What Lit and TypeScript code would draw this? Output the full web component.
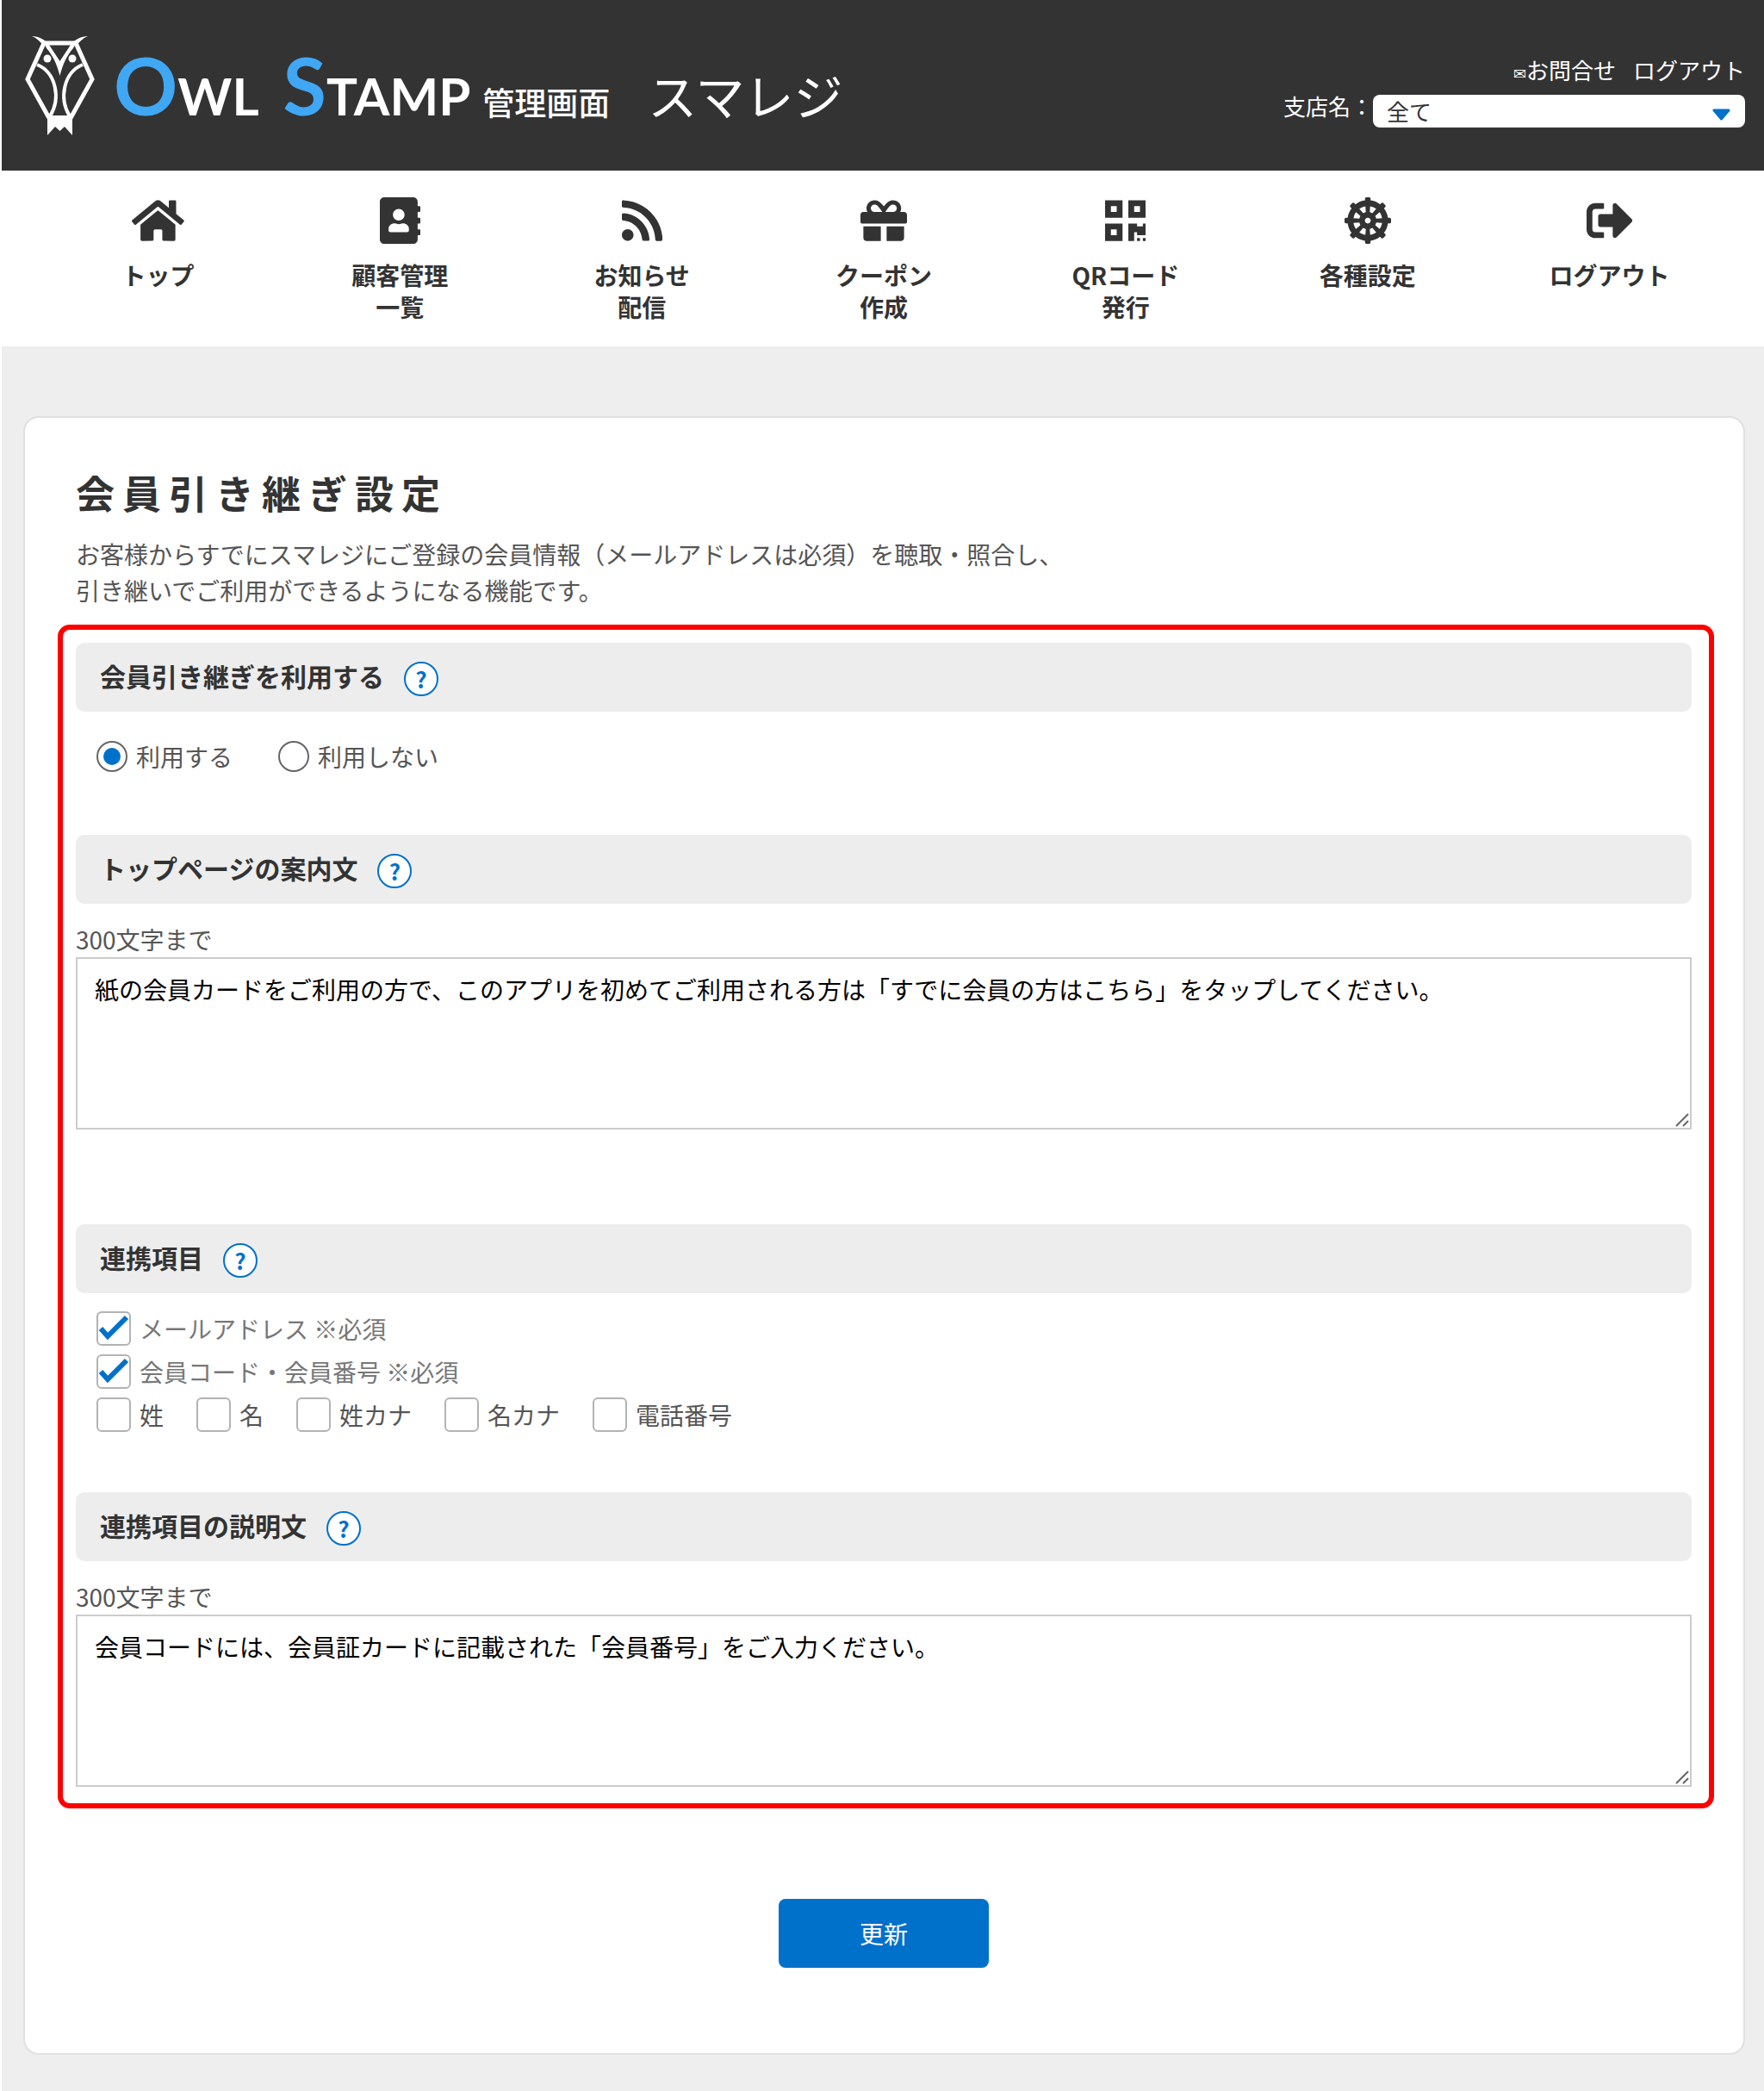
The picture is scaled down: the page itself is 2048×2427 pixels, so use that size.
import { LitElement, html, css, svg } from "lit";
import { customElement, property } from "lit/decorators.js";

interface NavItem {
  lines: string[];
  width: number;
  path: string;
}

const NAV: NavItem[] = [
  {
    lines: ["トップ"],
    width: 576,
    path: "M280.37 148.26L96 300.11V464a16 16 0 0 0 16 16l112.06-.29a16 16 0 0 0 15.92-16V368a16 16 0 0 1 16-16h64a16 16 0 0 1 16 16v95.64a16 16 0 0 0 16 16.05L464 480a16 16 0 0 0 16-16V300L295.67 148.26a12.19 12.19 0 0 0-15.3 0zM571.6 251.47L488 182.56V44.05a12 12 0 0 0-12-12h-56a12 12 0 0 0-12 12v72.61L318.47 43a48 48 0 0 0-61 0L4.34 251.47a12 12 0 0 0-1.6 16.9l25.5 31A12 12 0 0 0 45.15 301l235.22-193.74a12.19 12.19 0 0 1 15.3 0L530.9 301a12 12 0 0 0 16.9-1.6l25.5-31a12 12 0 0 0-1.7-16.93z",
  },
  {
    lines: ["顧客管理", "一覧"],
    width: 448,
    path: "M436 160c6.6 0 12-5.4 12-12v-40c0-6.6-5.4-12-12-12h-20V48c0-26.5-21.5-48-48-48H48C21.5 0 0 21.5 0 48v416c0 26.5 21.5 48 48 48h320c26.5 0 48-21.5 48-48v-48h20c6.6 0 12-5.4 12-12v-40c0-6.6-5.4-12-12-12h-20v-64h20c6.6 0 12-5.4 12-12v-40c0-6.6-5.4-12-12-12h-20v-64h20zm-228-32c35.3 0 64 28.7 64 64s-28.7 64-64 64-64-28.7-64-64 28.7-64 64-64zm112 236.8c0 10.6-10 19.2-22.4 19.2H118.4C106 384 96 375.4 96 364.8v-19.2c0-31.8 30.1-57.6 67.2-57.6h5c12.3 5.1 25.7 8 39.8 8s27.6-2.9 39.8-8h5c37.1 0 67.2 25.8 67.2 57.6v19.2z",
  },
  {
    lines: ["お知らせ", "配信"],
    width: 448,
    path: "M128.081 415.959c0 35.369-28.672 64.041-64.041 64.041S0 451.328 0 415.959s28.672-64.041 64.041-64.041 64.04 28.673 64.04 64.041zm175.66 47.25c-8.354-154.6-132.185-278.587-286.95-286.95C7.656 175.765 0 183.105 0 192.253v48.069c0 8.415 6.49 15.472 14.887 16.018 111.832 7.284 201.473 96.702 208.772 208.772.547 8.397 7.604 14.887 16.018 14.887h48.069c9.149.001 16.489-7.655 15.995-16.79zm144.249.288C439.596 229.677 251.465 40.445 16.503 32.01 7.473 31.686 0 38.981 0 48.016v48.068c0 8.625 6.835 15.645 15.453 15.999 191.179 7.839 344.627 161.316 352.465 352.465.353 8.618 7.373 15.453 15.999 15.453h48.068c9.034-.001 16.329-7.474 16.005-16.504z",
  },
  {
    lines: ["クーポン", "作成"],
    width: 512,
    path: "M32 448c0 17.7 14.3 32 32 32h160V320H32v128zm256 32h160c17.7 0 32-14.3 32-32V320H288v160zm192-320h-42.1c6.2-12.1 10.1-25.5 10.1-40 0-48.5-39.5-88-88-88-41.6 0-68.5 21.3-103 68.3-34.5-47-61.4-68.3-103-68.3-48.5 0-88 39.5-88 88 0 14.5 3.8 27.9 10.1 40H32c-17.7 0-32 14.3-32 32v80c0 8.8 7.2 16 16 16h480c8.8 0 16-7.2 16-16v-80c0-17.7-14.3-32-32-32zm-326.1 0c-22.1 0-40-17.9-40-40s17.9-40 40-40c19.9 0 34.6 3.3 86.1 80h-86.1zm206.1 0h-86.1c51.4-76.5 65.7-80 86.1-80 22.1 0 40 17.9 40 40s-17.9 40-40 40z",
  },
  {
    lines: ["QRコード", "発行"],
    width: 448,
    path: "M0 224h192V32H0v192zM64 96h64v64H64V96zm192-64v192h192V32H256zm128 128h-64V96h64v64zM0 480h192V288H0v192zm64-128h64v64H64v-64zm352-64h32v128h-96v-32h-32v96h-64V288h96v32h64v-32zm0 160h32v32h-32v-32zm-64 0h32v32h-32v-32z",
  },
  {
    lines: ["各種設定"],
    width: 512,
    path: "M495 225.06l-17.22 1.08c-5.27-39.49-20.79-75.64-43.86-105.84l12.95-11.43c6.92-6.11 7.25-16.79.73-23.31L426.44 64.4c-6.53-6.53-17.21-6.19-23.31.73L391.7 78.07c-30.2-23.06-66.35-38.58-105.83-43.86L286.94 17c.58-9.21-6.74-17-15.97-17h-29.94c-9.23 0-16.54 7.79-15.97 17l1.08 17.22c-39.49 5.27-75.64 20.79-105.83 43.86l-11.43-12.95c-6.11-6.92-16.79-7.25-23.31-.73L64.4 85.56c-6.53 6.53-6.19 17.21.73 23.31l12.95 11.43c-23.06 30.2-38.58 66.35-43.86 105.84L17 225.06c-9.21-.58-17 6.74-17 15.97v29.94c0 9.23 7.79 16.54 17 15.97l17.22-1.08c5.27 39.49 20.79 75.64 43.86 105.83l-12.95 11.43c-6.92 6.11-7.25 16.79-.73 23.31l21.17 21.17c6.53 6.53 17.21 6.19 23.31-.73l11.43-12.95c30.2 23.06 66.35 38.58 105.84 43.86L225.06 495c-.58 9.21 6.74 17 15.97 17h29.94c9.23 0 16.54-7.79 15.97-17l-1.08-17.22c39.49-5.27 75.64-20.79 105.84-43.86l11.43 12.95c6.11 6.92 16.79 7.25 23.31.73l21.17-21.17c6.53-6.53 6.19-17.21-.73-23.31l-12.95-11.43c23.06-30.2 38.58-66.35 43.86-105.83l17.22 1.08c9.21.58 17-6.74 17-15.97v-29.94c-.01-9.23-7.8-16.54-17.01-15.97zM281.84 98.61c24.81 4.07 47.63 13.66 67.23 27.78l-42.62 48.29c-8.73-5.44-18.32-9.54-28.62-11.95l4.01-64.12zm-51.68 0l4.01 64.12c-10.29 2.41-19.89 6.52-28.62 11.95l-42.62-48.29c19.6-14.12 42.42-23.71 67.23-27.78zm-103.77 64.33l48.3 42.61c-5.44 8.73-9.54 18.33-11.96 28.62l-64.12-4.01c4.07-24.81 13.66-47.62 27.78-67.22zm-27.78 118.9l64.12-4.01c2.41 10.29 6.52 19.89 11.95 28.62l-48.29 42.62c-14.12-19.6-23.71-42.42-27.78-67.23zm131.55 131.55c-24.81-4.07-47.63-13.66-67.23-27.78l42.61-48.3c8.73 5.44 18.33 9.54 28.62 11.96l-4 64.12zM256 288c-17.67 0-32-14.33-32-32s14.33-32 32-32 32 14.33 32 32-14.33 32-32 32zm25.84 125.39l-4.01-64.12c10.29-2.41 19.89-6.52 28.62-11.96l42.61 48.3c-19.6 14.12-42.41 23.71-67.22 27.78zm103.77-64.33l-48.29-42.62c5.44-8.73 9.54-18.32 11.95-28.62l64.12 4.01c-4.07 24.82-13.66 47.64-27.78 67.23zm-36.34-114.89c-2.41-10.29-6.52-19.89-11.96-28.62l48.3-42.61c14.12 19.6 23.71 42.42 27.78 67.23l-64.12 4z",
  },
  {
    lines: ["ログアウト"],
    width: 512,
    path: "M497 273L329 441c-15 15-41 4.5-41-17v-96H152c-13.3 0-24-10.7-24-24v-96c0-13.3 10.7-24 24-24h136V88c0-21.4 25.9-32 41-17l168 168c9.3 9.4 9.3 24.6 0 34zM192 436v-40c0-6.6-5.4-12-12-12H96c-17.7 0-32-14.3-32-32V160c0-17.7 14.3-32 32-32h84c6.6 0 12-5.4 12-12V76c0-6.6-5.4-12-12-12H96c-53 0-96 43-96 96v192c0 53 43 96 96 96h84c6.6 0 12-5.4 12-12z",
  },
];

const REQUIRED_FIELDS = ["メールアドレス ※必須", "会員コード・会員番号 ※必須"];
const OPTIONAL_FIELDS = ["姓", "名", "姓カナ", "名カナ", "電話番号"];

const owl = svg`
  <g fill="none" stroke="#fff" stroke-linejoin="miter">
    <path stroke-width="5" d="M23 10H60L79 52L54 97H29L4 52Z"/>
    <path stroke-width="4" d="M15 35C37 44 43 74 30 95M68 35C46 44 40 74 53 95"/>
  </g>
  <g fill="#fff">
    <path d="M9 2C17 2 24 6 28 11L22 13C19 8 14 4 9 2ZM74 2C66 2 59 6 55 11L61 13C64 8 69 4 74 2Z"/>
    <path d="M24 12H29L41.500 31L54 12H59L57 16C50 24 45 34 41.500 48C38 34 33 24 26 16Z"/>
    <circle cx="27" cy="28" r="4.500"/>
    <circle cx="56" cy="28" r="4.500"/>
    <path d="M27 94H56V117L47 107L41.500 112L36 107L27 117Z"/>
  </g>`;

/** Grey bar that opens each block of the form, with its help button. */
@customElement("section-bar")
export class SectionBar extends LitElement {
  @property() label = "";

  static styles = css`
    :host {
      display: flex;
      align-items: center;
      gap: 23px;
      height: 80px;
      padding: 0 28px;
      border-radius: 10px;
      background: #ededed;
      box-sizing: border-box;
    }
    .title {
      margin: 0;
      padding-bottom: 4px;
      font-size: 30px;
      line-height: 40px;
      font-weight: 700;
      color: #333;
    }
    .help {
      width: 40px;
      height: 40px;
      margin: 4px 0 0;
      padding: 0;
      border: 2px solid #0071cb;
      border-radius: 50%;
      background: #fff;
      color: #0071cb;
      font: inherit;
      font-size: 26px;
      line-height: 36px;
      font-weight: 700;
      text-align: center;
    }
  `;

  render() {
    return html`
      <h2 class="title">${this.label}</h2>
      <button class="help" type="button">?</button>
    `;
  }
}

@customElement("app-root")
export class AppRoot extends LitElement {
  static styles = css`
    :host {
      display: block;
      padding-left: 2px;
      background: #fff;
      color: #555;
      font-family: "Noto Sans CJK JP", sans-serif;
      font-size: 28px;
      line-height: 42px;
    }
    * {
      box-sizing: border-box;
    }
    a {
      color: inherit;
      text-decoration: none;
    }
    .header {
      display: flex;
      justify-content: space-between;
      align-items: flex-start;
      min-height: 198px;
      padding: 40px 22px 16px 26px;
      background: #333;
      color: #fff;
    }
    .brand {
      display: flex;
      align-items: flex-start;
    }
    .owl {
      flex: none;
      width: 84px;
      height: 122px;
    }
    .logo {
      display: flex;
      align-items: baseline;
      margin: 4px 0 0 20px;
      line-height: 110px;
    }
    .word {
      font-family: Lato, sans-serif;
      font-size: 60px;
      font-weight: 700;
      margin-right: 28px;
    }
    .word:nth-child(2) {
      margin-right: 14px;
    }
    .initial {
      font-size: 92px;
      color: #40a7f5;
    }
    .sub {
      font-size: 37px;
      font-weight: 500;
    }
    .store {
      font-size: 57px;
      margin-left: 44px;
    }
    .account {
      display: flex;
      flex-direction: column;
      align-items: flex-end;
      padding-top: 20px;
      font-size: 26px;
    }
    .links {
      display: flex;
      gap: 20px;
    }
    .mail {
      font-family: "DejaVu Sans", sans-serif;
      font-size: 18px;
      line-height: 0;
    }
    .branch {
      display: flex;
      align-items: flex-start;
    }
    .select {
      position: relative;
      margin-top: 8px;
    }
    .select select {
      display: block;
      width: 432px;
      height: 38px;
      padding: 0 16px;
      border: 0;
      border-radius: 8px;
      background: #fff;
      color: #333;
      font: inherit;
      line-height: 38px;
      appearance: none;
    }
    .caret {
      position: absolute;
      right: 17px;
      bottom: 8px;
      width: 21px;
      height: 14px;
      pointer-events: none;
    }
    .nav {
      display: flex;
      padding: 31px 39px 24px 41px;
      background: #fff;
    }
    .nav a {
      flex: 1;
      display: flex;
      flex-direction: column;
      align-items: center;
      gap: 18px;
      min-height: 149px;
      color: #333;
      font-weight: 700;
      line-height: 37px;
      text-align: center;
    }
    .nav svg {
      height: 54px;
    }
    .page {
      padding: 81px 22px 42px 25px;
      background: #eee;
    }
    .card {
      padding: 57px 60px 99px 59px;
      border: 2px solid #e0e0e0;
      border-radius: 18px;
      background: #fff;
    }
    .heading {
      margin: 0 0 20px;
      font-size: 45px;
      line-height: 60px;
      font-weight: 700;
      letter-spacing: 9px;
      color: #333;
    }
    .lead {
      margin: 0 0 19px;
    }
    .framed {
      margin: 0 -26px 0 -21px;
      padding: 15px 20px 19px 15px;
      border: 6px solid #f00;
      border-radius: 14px;
    }
    .choices {
      display: flex;
      gap: 53px;
      padding: 34px 24px 73px;
    }
    .checks {
      display: flex;
      flex-direction: column;
      gap: 10px;
      padding: 21px 24px 70px;
    }
    .row {
      display: flex;
      gap: 38px;
    }
    .option {
      display: flex;
      align-items: center;
      gap: 10px;
      height: 40px;
    }
    .choices .option {
      height: 36px;
    }
    .locked {
      color: #777;
    }
    input {
      appearance: none;
      flex: none;
      display: grid;
      place-items: center;
      margin: 0;
      background: #fff;
    }
    input[type="radio"] {
      width: 36px;
      height: 36px;
      border: 2px solid #666;
      border-radius: 50%;
    }
    input[type="radio"]:checked::after {
      content: "";
      width: 20px;
      height: 20px;
      border-radius: 50%;
      background: #0071cb;
    }
    input[type="checkbox"] {
      width: 40px;
      height: 40px;
      border: 2px solid #b3b3b3;
      border-radius: 6px;
    }
    .tickbox {
      position: relative;
      display: flex;
    }
    .tick {
      position: absolute;
      inset: 0;
      width: 40px;
      height: 40px;
      pointer-events: none;
    }
    .field {
      padding-top: 20px;
    }
    .field label {
      display: block;
    }
    .area {
      position: relative;
    }
    .spaced {
      margin-bottom: 110px;
    }
    textarea {
      display: block;
      width: 100%;
      height: 200px;
      margin: 0;
      padding: 14px 20px;
      border: 2px solid #ccc;
      border-radius: 0;
      background: #fff;
      color: #000;
      font: inherit;
      resize: none;
    }
    .grip {
      position: absolute;
      right: 3px;
      bottom: 3px;
      width: 16px;
      height: 16px;
      pointer-events: none;
    }
    .actions {
      display: flex;
      justify-content: center;
      padding-top: 105px;
    }
    .submit {
      width: 244px;
      height: 80px;
      padding: 0;
      border: 0;
      border-radius: 8px;
      background: #0071cb;
      color: #fff;
      font: inherit;
    }
  `;

  private textField(id: string, value: string, spaced: boolean) {
    return html`
      <div class="field ${spaced ? "spaced" : ""}">
        <label for=${id}>300文字まで</label>
        <div class="area">
          <textarea id=${id} maxlength="300" .value=${value}></textarea>
          <svg class="grip" viewBox="0 0 16 16" stroke="#666" stroke-width="2">
            <path d="M1 15L15 1M9 15L15 9" />
          </svg>
        </div>
      </div>
    `;
  }

  private navLink(item: NavItem) {
    return html`
      <a href="#">
        <svg viewBox="0 0 ${item.width} 512" fill="#333"><path d=${item.path} /></svg>
        <span>${item.lines.map((line, i) => (i ? html`<br />${line}` : line))}</span>
      </a>
    `;
  }

  render() {
    return html`
      <header class="header">
        <div class="brand">
          <svg class="owl" viewBox="0 0 84 122">${owl}</svg>
          <div class="logo">
            <span class="word"><span class="initial">O</span>WL</span>
            <span class="word"><span class="initial">S</span>TAMP</span>
            <span class="sub">管理画面</span>
            <span class="store">スマレジ</span>
          </div>
        </div>
        <div class="account">
          <div class="links">
            <a href="#"><span class="mail">✉</span>お問合せ</a>
            <a href="#">ログアウト</a>
          </div>
          <div class="branch">
            <label for="branch">支店名：</label>
            <div class="select">
              <select id="branch">
                <option>全て</option>
              </select>
              <svg class="caret" viewBox="0 0 21 14" fill="#0071cb" stroke="#0071cb" stroke-width="3" stroke-linejoin="round">
                <path d="M2 2H19L10.500 12Z" />
              </svg>
            </div>
          </div>
        </div>
      </header>
      <nav class="nav">${NAV.map((item) => this.navLink(item))}</nav>
      <main class="page">
        <form class="card">
          <h1 class="heading">会員引き継ぎ設定</h1>
          <p class="lead">
            お客様からすでにスマレジにご登録の会員情報（メールアドレスは必須）を聴取・照合し、<br />引き継いでご利用ができるようになる機能です。
          </p>
          <div class="framed">
            <section-bar label="会員引き継ぎを利用する"></section-bar>
            <div class="choices">
              <label class="option"><input type="radio" name="use" checked />利用する</label>
              <label class="option"><input type="radio" name="use" />利用しない</label>
            </div>
            <section-bar label="トップページの案内文"></section-bar>
            ${this.textField(
              "guide",
              "紙の会員カードをご利用の方で、このアプリを初めてご利用される方は「すでに会員の方はこちら」をタップしてください。",
              true
            )}
            <section-bar label="連携項目"></section-bar>
            <div class="checks">
              ${REQUIRED_FIELDS.map(
                (name) => html`
                  <label class="option locked">
                    <span class="tickbox">
                      <input type="checkbox" checked disabled />
                      <svg class="tick" viewBox="0 0 40 40" fill="none" stroke="#0071cb" stroke-width="6">
                        <path d="M5 20L13 29L35 7" />
                      </svg>
                    </span>
                    ${name}
                  </label>
                `
              )}
              <div class="row">
                ${OPTIONAL_FIELDS.map(
                  (name) => html`<label class="option"><input type="checkbox" />${name}</label>`
                )}
              </div>
            </div>
            <section-bar label="連携項目の説明文"></section-bar>
            ${this.textField(
              "description",
              "会員コードには、会員証カードに記載された「会員番号」をご入力ください。",
              false
            )}
          </div>
          <div class="actions">
            <button class="submit" type="submit">更新</button>
          </div>
        </form>
      </main>
    `;
  }
}
